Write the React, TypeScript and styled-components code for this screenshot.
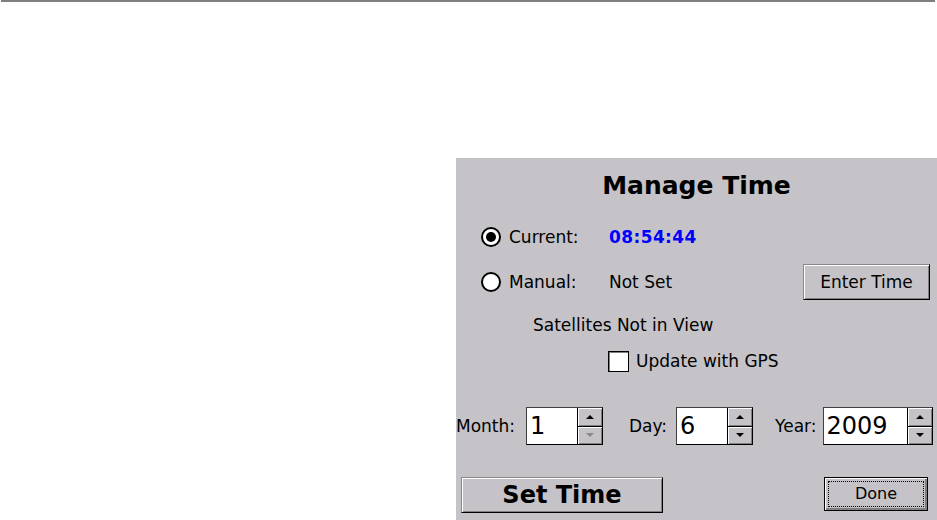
import styled, { createGlobalStyle } from 'styled-components';

const GlobalStyle = createGlobalStyle`
  html, body {
    margin: 0;
    padding: 0;
    background: #ffffff;
  }
  body {
    font-family: 'DejaVu Sans', 'Liberation Sans', sans-serif;
    color: #000;
  }
`;

const TopRule = styled.div`
  height: 2px;
  margin: 0 2px 0 1px;
  background: #808080;
`;

const Page = styled.div`
  display: flex;
  padding: 156px 0 0 456px;
  height: 520px;
  box-sizing: border-box;
`;

const Panel = styled.div`
  flex: 1;
  display: flex;
  flex-direction: column;
  background: #c5c3c7;
  font-size: 17px;
`;

const Title = styled.div`
  height: 54px;
  display: flex;
  align-items: center;
  justify-content: center;
  font-size: 25px;
  font-weight: bold;
`;

const OptionRow = styled.div<{ $h: number }>`
  height: ${({ $h }) => $h}px;
  display: flex;
  align-items: center;
  padding: 0 7px 0 25px;
`;

const Radio = styled.span<{ $checked?: boolean }>`
  width: 20px;
  height: 20px;
  box-sizing: border-box;
  border-radius: 50%;
  border: 2px solid #000;
  background: #fff;
  display: flex;
  align-items: center;
  justify-content: center;
  margin-right: 8px;
  &::after {
    content: '';
    width: 10px;
    height: 10px;
    border-radius: 50%;
    background: ${({ $checked }) => ($checked ? '#000' : 'transparent')};
  }
`;

const OptionLabel = styled.span`
  width: 100px;
`;

const Clock = styled.span`
  color: #0000ff;
  font-weight: bold;
  letter-spacing: 0.4px;
`;

const Winbutton = styled.button<{ $w: number; $h: number; $size?: number; $bold?: boolean; $default?: boolean }>`
  width: ${({ $w }) => $w}px;
  height: ${({ $h }) => $h}px;
  font-family: inherit;
  font-size: ${({ $size }) => $size || 17}px;
  font-weight: ${({ $bold }) => ($bold ? 'bold' : 'normal')};
  color: #000;
  background: #c5c3c7;
  border: 1px solid #000;
  border-top-color: #8a888c;
  border-left-color: #8a888c;
  box-shadow: inset 1px 1px #ffffff, inset -1px -1px #808080;
  padding: 0;
  position: relative;
  ${({ $default }) =>
    $default &&
    `
    border-color: #000;
    box-shadow: inset 1px 1px #ffffff, inset -2px -2px #808080;
  `}
`;

const FocusRing = styled.span`
  position: absolute;
  inset: 3px;
  border: 1px dotted #000;
  display: flex;
  align-items: center;
  justify-content: center;
`;

const PushRight = styled.div`
  margin-left: auto;
`;

const StatusLine = styled.div`
  height: 46px;
  display: flex;
  align-items: center;
  padding-left: 77px;
`;

const CheckRow = styled.label`
  height: 26px;
  display: flex;
  align-items: center;
  padding-left: 152px;
`;

const CheckBox = styled.span`
  width: 21px;
  height: 21px;
  box-sizing: border-box;
  border: 1px solid #000;
  box-shadow: inset 1px 1px #808080;
  background: #fff;
  margin-right: 7px;
`;

const SpinRow = styled.div`
  height: 38px;
  margin-top: 33px;
  display: flex;
  align-items: center;
`;

const SpinGroup = styled.div<{ $gap: number; $lead: number }>`
  display: flex;
  align-items: center;
  gap: ${({ $gap }) => $gap}px;
  margin-left: ${({ $lead }) => $lead}px;
`;

const SpinBox = styled.div`
  display: flex;
  height: 38px;
  box-sizing: border-box;
  border: 1px solid #000;
  border-top-color: #404040;
  border-left-color: #404040;
`;

const SpinValue = styled.div<{ $w: number }>`
  width: ${({ $w }) => $w}px;
  background: #fff;
  font-size: 24px;
  display: flex;
  align-items: center;
  padding-left: 3px;
  box-sizing: border-box;
`;

const SpinButtons = styled.div`
  width: 24px;
  display: flex;
  flex-direction: column;
  border-left: 1px solid #000;
`;

const SpinArrow = styled.div<{ $up?: boolean; $disabled?: boolean }>`
  flex: 1;
  display: flex;
  align-items: center;
  justify-content: center;
  background: #c5c3c7;
  box-shadow: inset 1px 1px #ffffff, inset -1px -1px #808080;
  ${({ $up }) => ($up ? 'border-bottom: 1px solid #000;' : '')}
  &::after {
    content: '';
    width: 0;
    height: 0;
    border-left: 4px solid transparent;
    border-right: 4px solid transparent;
    ${({ $up, $disabled }) =>
      $up
        ? `border-bottom: 4px solid ${$disabled ? '#8a888c' : '#000'};`
        : `border-top: 4px solid ${$disabled ? '#8a888c' : '#000'};`}
  }
`;

const ActionRow = styled.div`
  height: 36px;
  margin-top: 32px;
  display: flex;
  align-items: center;
  padding: 0 9px 0 5px;
`;

function Spinner({ value, width, downDisabled }: { value: string; width: number; downDisabled?: boolean }) {
  return (
    <SpinBox>
      <SpinValue $w={width}>{value}</SpinValue>
      <SpinButtons>
        <SpinArrow $up />
        <SpinArrow $disabled={downDisabled} />
      </SpinButtons>
    </SpinBox>
  );
}

export default function App() {
  return (
    <>
      <GlobalStyle />
      <TopRule />
      <Page>
        <Panel>
          <Title>Manage Time</Title>
          <OptionRow $h={50}>
            <Radio $checked />
            <OptionLabel>Current:</OptionLabel>
            <Clock>08:54:44</Clock>
          </OptionRow>
          <OptionRow $h={40}>
            <Radio />
            <OptionLabel>Manual:</OptionLabel>
            <span>Not Set</span>
            <PushRight>
              <Winbutton type='button' $w={127} $h={36}>
                Enter Time
              </Winbutton>
            </PushRight>
          </OptionRow>
          <StatusLine>Satellites Not in View</StatusLine>
          <CheckRow>
            <CheckBox />
            Update with GPS
          </CheckRow>
          <SpinRow>
            <SpinGroup $gap={11} $lead={0}>
              <span>Month:</span>
              <Spinner value='1' width={50} downDisabled />
            </SpinGroup>
            <SpinGroup $gap={9} $lead={26}>
              <span>Day:</span>
              <Spinner value='6' width={50} />
            </SpinGroup>
            <SpinGroup $gap={6} $lead={22}>
              <span>Year:</span>
              <Spinner value='2009' width={83} />
            </SpinGroup>
          </SpinRow>
          <ActionRow>
            <Winbutton type='button' $w={202} $h={36} $size={24} $bold>
              Set Time
            </Winbutton>
            <PushRight>
              <Winbutton type='button' $w={104} $h={34} $size={16} $default>
                <FocusRing>Done</FocusRing>
              </Winbutton>
            </PushRight>
          </ActionRow>
        </Panel>
      </Page>
    </>
  );
}
